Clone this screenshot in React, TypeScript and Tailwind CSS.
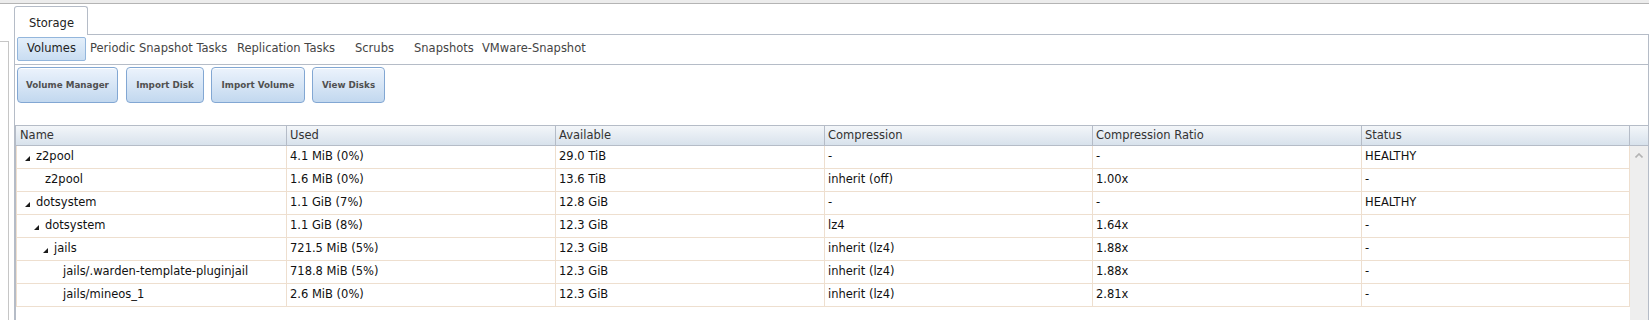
import React from 'react';

type Row = {
  name: string;
  level: number;
  expandable: boolean;
  used: string;
  available: string;
  compression: string;
  ratio: string;
  status: string;
};

const rows: Row[] = [
  { name: 'z2pool', level: 0, expandable: true, used: '4.1 MiB (0%)', available: '29.0 TiB', compression: '-', ratio: '-', status: 'HEALTHY' },
  { name: 'z2pool', level: 1, expandable: false, used: '1.6 MiB (0%)', available: '13.6 TiB', compression: 'inherit (off)', ratio: '1.00x', status: '-' },
  { name: 'dotsystem', level: 0, expandable: true, used: '1.1 GiB (7%)', available: '12.8 GiB', compression: '-', ratio: '-', status: 'HEALTHY' },
  { name: 'dotsystem', level: 1, expandable: true, used: '1.1 GiB (8%)', available: '12.3 GiB', compression: 'lz4', ratio: '1.64x', status: '-' },
  { name: 'jails', level: 2, expandable: true, used: '721.5 MiB (5%)', available: '12.3 GiB', compression: 'inherit (lz4)', ratio: '1.88x', status: '-' },
  { name: 'jails/.warden-template-pluginjail', level: 3, expandable: false, used: '718.8 MiB (5%)', available: '12.3 GiB', compression: 'inherit (lz4)', ratio: '1.88x', status: '-' },
  { name: 'jails/mineos_1', level: 3, expandable: false, used: '2.6 MiB (0%)', available: '12.3 GiB', compression: 'inherit (lz4)', ratio: '2.81x', status: '-' },
];

const columns = ['Name', 'Used', 'Available', 'Compression', 'Compression Ratio', 'Status'];
const colWidths = ['w-[271px]', 'w-[269px]', 'w-[269px]', 'w-[268px]', 'w-[269px]', 'w-[268px]'];
const indents = ['pl-[8px]', 'pl-[17px]', 'pl-[26px]', 'pl-[35px]'];

function Expander({ show }: { show: boolean }) {
  return (
    <span className="w-[11px] shrink-0 flex items-center">
      {show && (
        <svg width="5" height="5" viewBox="0 0 5 5" className="mt-[2px]">
          <polygon points="5,0 5,5 0,5" fill="#1a1a1a" />
        </svg>
      )}
    </span>
  );
}

function ActionButton({ label, width, className = '' }: { label: string; width: string; className?: string }) {
  return (
    <button
      className={`${width} ${className} h-[36px] rounded-[4px] border border-[#82a7d3] bg-gradient-to-b from-[#ecf3fc] to-[#c2d8ef] text-[8.75px] font-bold text-[#505050] pt-[2px] shadow-[inset_0_1px_0_#ffffff]`}
    >
      {label}
    </button>
  );
}

export default function App() {
  return (
    <div className="h-[320px] w-full overflow-hidden bg-white flex flex-col font-['DejaVu_Sans',sans-serif] text-[11.5px]">
      <div className="h-[4px] bg-[#ececec] border-b border-[#b4b4b4]" />
      <div className="flex flex-1 min-h-0">
        {/* collapsed nav panel */}
        <div className="w-[9px] mt-[37px] border-t border-r border-[#c6c6c6]" />

        <div className="flex-1 ml-[5px] flex flex-col min-h-0">
          {/* tab strip */}
          <div className="h-[31px] flex shrink-0">
            <div className="w-[74px] h-[29px] mt-[2px] border border-b-0 border-[#b5bcc7] rounded-t-[3px] bg-white text-[#222] pl-[14px] pt-[10px] leading-[13px]">
              Storage
            </div>
            <div className="flex-1 border-b border-[#b5bcc7]" />
          </div>

          <div className="flex-1 flex flex-col min-h-0 border-l border-r border-[#b5bcc7]">
            {/* sub tabs */}
            <div className="h-[30px] shrink-0 border-b border-[#b5bcc7] flex items-start pt-[2px] pl-[2px] text-[#444]">
              <div className="w-[69px] h-[24px] flex items-center justify-center rounded-[2px] border border-[#93b6dc] bg-gradient-to-b from-[#e4effa] to-[#c9ddf2] text-[#222]">
                Volumes
              </div>
              <div className="w-[151px] h-[24px] flex items-center pl-[4px]">Periodic Snapshot Tasks</div>
              <div className="w-[118px] h-[24px] flex items-center">Replication Tasks</div>
              <div className="w-[59px] h-[24px] flex items-center">Scrubs</div>
              <div className="w-[68px] h-[24px] flex items-center">Snapshots</div>
              <div className="h-[24px] flex items-center">VMware-Snapshot</div>
            </div>

            {/* actions */}
            <div className="flex shrink-0 pt-[2px] pl-[2px]">
              <ActionButton label="Volume Manager" width="w-[101px]" />
              <ActionButton label="Import Disk" width="w-[78px]" className="ml-[8px]" />
              <ActionButton label="Import Volume" width="w-[94px]" className="ml-[7px]" />
              <ActionButton label="View Disks" width="w-[73px]" className="ml-[7px]" />
            </div>

            {/* volumes grid */}
            <div className="mt-[22px] flex-1 flex flex-col min-h-0 border-l border-[#b5bcc7]">
              <div className="h-[21px] shrink-0 flex border-t border-b border-[#b5bcc7] bg-gradient-to-b from-[#f3f6f9] to-[#d8e2ec] text-[#333]">
                {columns.map((c, i) => (
                  <div
                    key={c}
                    className={`${colWidths[i]} h-full flex items-center border-r border-[#b5bcc7] ${i === 0 ? 'pl-[4px]' : 'pl-[3px]'}`}
                  >
                    {c}
                  </div>
                ))}
                <div className="flex-1" />
              </div>

              <div className="flex flex-1 min-h-0">
                <div className="w-[1614px]">
                  {rows.map((r, idx) => (
                    <div key={idx} className="flex h-[23px] border-b border-[#eedfcf] text-[#111]">
                      <div className={`${colWidths[0]} h-full flex items-center border-l border-r border-[#eedfcf] ${indents[r.level]}`}>
                        <Expander show={r.expandable} />
                        <span>{r.name}</span>
                      </div>
                      <div className={`${colWidths[1]} h-full flex items-center border-r border-[#eedfcf] pl-[3px]`}>{r.used}</div>
                      <div className={`${colWidths[2]} h-full flex items-center border-r border-[#eedfcf] pl-[3px]`}>{r.available}</div>
                      <div className={`${colWidths[3]} h-full flex items-center border-r border-[#eedfcf] pl-[3px]`}>{r.compression}</div>
                      <div className={`${colWidths[4]} h-full flex items-center border-r border-[#eedfcf] pl-[3px]`}>{r.ratio}</div>
                      <div className={`${colWidths[5]} h-full flex items-center border-r border-[#eedfcf] pl-[3px]`}>{r.status}</div>
                    </div>
                  ))}
                </div>
                <div className="w-[18px] bg-[#eeeeee] flex justify-center pt-[7px]">
                  <svg width="8" height="5" viewBox="0 0 8 5">
                    <polyline points="0.5,4.5 4,1 7.5,4.5" fill="none" stroke="#b3b3b3" strokeWidth="1.6" />
                  </svg>
                </div>
              </div>
            </div>
          </div>
        </div>
      </div>
    </div>
  );
}
